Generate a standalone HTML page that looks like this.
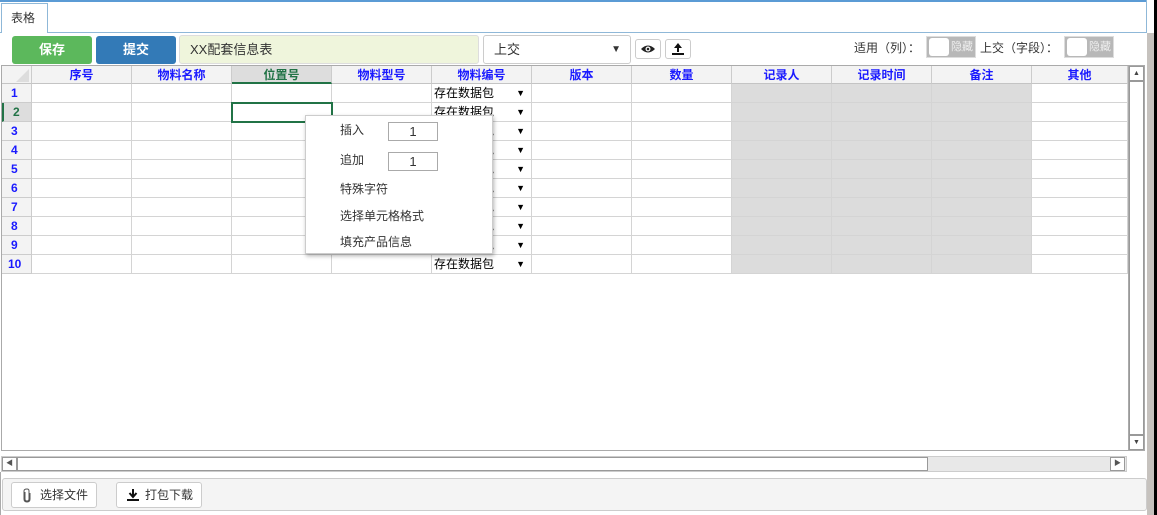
<!DOCTYPE html>
<html><head><meta charset="utf-8"><style>
*{box-sizing:border-box;margin:0;padding:0}
body{width:1157px;height:515px;overflow:hidden;background:#fff;font-family:"Liberation Sans","Noto Sans CJK SC",sans-serif;font-size:12px;color:#333;position:relative}
.a{position:absolute}
.hd{position:absolute;top:66px;height:18px;background:#f3f3f3;border-right:1px solid #ccc;border-bottom:1px solid #c4c4c4;color:#1a1aff;font-weight:bold;text-align:center;line-height:18px;font-size:12px}
.rn{position:absolute;left:2px;width:30px;height:19px;background:#f3f3f3;border-right:1px solid #ccc;border-bottom:1px solid #ccc;color:#1a1aff;font-weight:bold;line-height:19px;padding-left:9px}
.cell{position:absolute;height:19px;border-right:1px solid #d4d4d4;border-bottom:1px solid #d4d4d4}
.dd{font-size:12px;color:#000;line-height:19px;padding-left:2px}
.dd span{position:absolute;right:6px;font-size:9px}
.btn{position:absolute;border:1px solid #ccc;border-radius:3px;background:#fff}
.mi{position:absolute;left:34px;font-size:12px;color:#333}
.inp{position:absolute;left:82px;width:50px;height:19px;border:1px solid #aaa;text-align:center;line-height:17px;font-size:13px;color:#333}
.tg{position:absolute;top:36px;width:50px;height:22px;background:#b8b8b8;border:1px solid #ddd;color:#eee;font-size:11px;line-height:20px;padding-left:24px}
.tg i{position:absolute;left:2px;top:1px;width:20px;height:18px;background:#fff;border-radius:3px}
</style></head><body>
<div class="a" style="left:0;top:0;width:1147px;height:2px;background:#5b9bd5"></div>
<div class="a" style="left:0;top:32px;width:1147px;height:1px;background:#8fb8d8"></div>
<div class="a" style="left:1146px;top:0;width:1px;height:33px;background:#8fb8d8"></div>
<div class="a" style="left:1147px;top:33px;width:7px;height:482px;background:#c6c2be"></div>
<div class="a" style="left:1154px;top:0;width:3px;height:515px;background:#000"></div>
<div class="a" style="left:1px;top:3px;width:47px;height:30px;border:1px solid #8fb8d8;border-bottom:none;background:#fff;line-height:28px;padding-left:9px;font-size:12px;color:#333">表格</div>

<div class="a" style="left:12px;top:36px;width:80px;height:28px;background:#5cb85c;border-radius:3px;color:#fff;font-weight:bold;text-align:center;line-height:28px;font-size:13px">保存</div>
<div class="a" style="left:96px;top:36px;width:80px;height:28px;background:#337ab7;border-radius:3px;color:#fff;font-weight:bold;text-align:center;line-height:28px;font-size:13px">提交</div>
<div class="a" style="left:179px;top:35px;width:300px;height:29px;background:#eff5dc;border:1px solid #ddd;border-radius:3px;line-height:27px;padding-left:10px;font-size:13px;color:#333">XX配套信息表</div>
<div class="a" style="left:483px;top:35px;width:148px;height:29px;border:1px solid #ccc;border-radius:3px;line-height:27px;padding-left:10px;font-size:13px">上交<span style="position:absolute;right:9px;font-size:10px">▼</span></div>
<div class="btn" style="left:635px;top:39px;width:26px;height:20px"><svg width="24" height="18" viewBox="0 0 24 18"><path d="M5 9Q12 2 19 9Q12 16 5 9Z" fill="#222"/><circle cx="12" cy="9" r="2.5" fill="#fff"/><circle cx="12" cy="9" r="1.3" fill="#222"/></svg></div>
<div class="btn" style="left:665px;top:39px;width:26px;height:20px"><svg width="24" height="18" viewBox="0 0 24 18"><path d="M12 3L8 8H11V12H13V8H16Z" fill="#111"/><rect x="6" y="13" width="12" height="2" fill="#111"/></svg></div>
<div class="a" style="left:854px;top:39px;font-size:12px;color:#333">适用（列）：</div>
<div class="tg" style="left:926px"><i></i>隐藏</div>
<div class="a" style="left:980px;top:39px;font-size:12px;color:#333">上交（字段）：</div>
<div class="tg" style="left:1064px"><i></i>隐藏</div>

<div class="a" style="left:1px;top:65px;width:1127px;height:386px;border:1px solid #aaa;border-right:none"></div>
<div class="a" style="left:2px;top:66px;width:30px;height:18px;background:#f3f3f3;border-right:1px solid #ccc;border-bottom:1px solid #c4c4c4"><svg width="29" height="18"><path d="M27 3V16H14Z" fill="#ddd"/></svg></div>
<div class="hd" style="left:32px;width:100px">序号</div>
<div class="hd" style="left:132px;width:100px">物料名称</div>
<div class="hd" style="left:232px;width:100px;background:#ddd;color:#217346;border-bottom:2px solid #217346">位置号</div>
<div class="hd" style="left:332px;width:100px">物料型号</div>
<div class="hd" style="left:432px;width:100px">物料编号</div>
<div class="hd" style="left:532px;width:100px">版本</div>
<div class="hd" style="left:632px;width:100px">数量</div>
<div class="hd" style="left:732px;width:100px">记录人</div>
<div class="hd" style="left:832px;width:100px">记录时间</div>
<div class="hd" style="left:932px;width:100px">备注</div>
<div class="hd" style="left:1032px;width:96px">其他</div>
<div id="rows"></div>
<script>
var h='',cols=[32,132,232,332,432,532,632,732,832,932,1032],w=[100,100,100,100,100,100,100,100,100,100,96];
for(var r=0;r<10;r++){var t=84+r*19;
h+='<div class="rn" style="top:'+t+'px;'+(r==1?'background:#ddd;color:#217346;border-left:2px solid #217346;':'')+(r==9?'padding-left:6px;':'')+'">'+(r+1)+'</div>';
for(var c=0;c<11;c++){var bg=(c>=7&&c<=9)?'background:#dcdcdc;':'';
h+='<div class="cell'+(c==4?' dd':'')+'" style="left:'+cols[c]+'px;top:'+t+'px;width:'+w[c]+'px;'+bg+'">'+(c==4?'存在数据包<span>▼</span>':'')+'</div>';}}
document.getElementById('rows').innerHTML=h;
</script>
<div class="a" style="left:231px;top:102px;width:102px;height:21px;border:2px solid #217346"></div>

<div class="a" style="left:305px;top:115px;width:188px;height:139px;background:#fff;border:1px solid #ccc;box-shadow:1px 2px 4px rgba(0,0,0,.3)">
<div class="mi" style="top:5px">插入</div><div class="inp" style="top:6px">1</div>
<div class="mi" style="top:35px">追加</div><div class="inp" style="top:36px">1</div>
<div class="mi" style="top:64px">特殊字符</div>
<div class="mi" style="top:91px">选择单元格格式</div>
<div class="mi" style="top:117px">填充产品信息</div>
</div>

<div class="a" style="left:1128px;top:65px;width:17px;height:386px;background:#f0f0f0;border:1px solid #aaa"></div>
<div class="a" style="left:1129px;top:66px;width:15px;height:15px;background:#fff;border:1px solid #999;font-size:7px;text-align:center;line-height:13px;color:#444">▲</div>
<div class="a" style="left:1129px;top:81px;width:15px;height:354px;background:#fff;border:1px solid #999"></div>
<div class="a" style="left:1129px;top:435px;width:15px;height:15px;background:#fff;border:1px solid #999;font-size:7px;text-align:center;line-height:13px;color:#444">▼</div>
<div class="a" style="left:1px;top:456px;width:1126px;height:16px;background:#e8e8e8;border:1px solid #ccc"></div>
<div class="a" style="left:2px;top:457px;width:15px;height:14px;background:#fff;border:1px solid #999;font-size:7px;line-height:12px;text-align:center;color:#555">◀</div>
<div class="a" style="left:17px;top:457px;width:911px;height:14px;background:#fff;border:1px solid #999"></div>
<div class="a" style="left:1110px;top:457px;width:15px;height:14px;background:#fff;border:1px solid #999;font-size:7px;line-height:12px;text-align:center;color:#555">▶</div>
<div class="a" style="left:0;top:472px;width:1px;height:43px;background:#aaa"></div>
<div class="a" style="left:2px;top:478px;width:1145px;height:33px;background:#f4f4f4;border:1px solid #ccc;border-radius:3px"></div>
<div class="btn" style="left:11px;top:482px;width:86px;height:26px;line-height:24px;padding-left:28px;font-size:12px"><svg class="a" style="left:10px;top:5px" width="10" height="15" viewBox="0 0 10 15"><path d="M3 4V11Q3 13 5 13Q7 13 7 11V3Q7 1 5 1Q2 1 2 3V11Q2 14 5 14Q8 14 8 11V5" fill="none" stroke="#555" stroke-width="1"/></svg>选择文件</div>
<div class="btn" style="left:116px;top:482px;width:86px;height:26px;line-height:24px;padding-left:28px;font-size:12px"><svg class="a" style="left:9px;top:5px" width="14" height="15" viewBox="0 0 14 15"><path d="M7 1V8M3.5 5L7 9L10.5 5" fill="none" stroke="#111" stroke-width="2"/><rect x="1" y="11" width="12" height="2" fill="#111"/></svg>打包下载</div>
</body></html>
